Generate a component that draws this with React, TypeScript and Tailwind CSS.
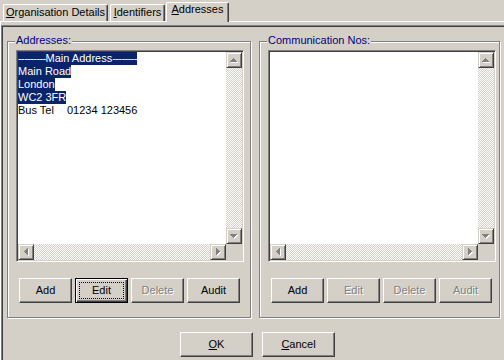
import React from "react";

type Dir = "up" | "down" | "left" | "right";

function Arrow({ dir, color = "#808080", shadow = true }: { dir: Dir; color?: string; shadow?: boolean }) {
  const rects: [number, number, number, number][] = [];
  for (let r = 0; r < 4; r++) {
    if (dir === "up") rects.push([3 - r, r, 2 * r + 1, 1]);
    if (dir === "down") rects.push([r, r, 7 - 2 * r, 1]);
    if (dir === "left") rects.push([r, 3 - r, 1, 2 * r + 1]);
    if (dir === "right") rects.push([r, r, 1, 7 - 2 * r]);
  }
  const horiz = dir === "up" || dir === "down";
  const w = horiz ? 8 : 5;
  const h = horiz ? 5 : 8;
  return (
    <svg width={w} height={h} viewBox={`0 0 ${w} ${h}`} shapeRendering="crispEdges" className="block">
      {shadow &&
        rects.map((r, i) => <rect key={"s" + i} x={r[0] + 1} y={r[1] + 1} width={r[2]} height={r[3]} fill="#ffffff" />)}
      {rects.map((r, i) => (
        <rect key={i} x={r[0]} y={r[1]} width={r[2]} height={r[3]} fill={color} />
      ))}
    </svg>
  );
}

function ScrollBtn({ dir }: { dir: Dir }) {
  return (
    <div className="w-[16px] h-[16px] shrink-0 bg-[#d4d0c8] border border-t-[#d4d0c8] border-l-[#d4d0c8] border-r-[#404040] border-b-[#404040] shadow-[inset_1px_1px_0_#ffffff,inset_-1px_-1px_0_#808080] flex items-center justify-center">
      <Arrow dir={dir} />
    </div>
  );
}

const track =
  "bg-[image:repeating-conic-gradient(#d4d0c8_0_25%,#ffffff_0_50%)] bg-[length:2px_2px]";

function ListBox({ children }: { children?: React.ReactNode }) {
  return (
    <div className="w-[228px] h-[212px] border border-t-[#808080] border-l-[#808080] border-r-white border-b-white shadow-[inset_1px_1px_0_#404040,inset_-1px_-1px_0_#d4d0c8] p-[1px]">
      <div className="w-full h-full grid grid-cols-[1fr_16px] grid-rows-[1fr_16px]">
        <div className="bg-white overflow-hidden">{children}</div>
        <div className="flex flex-col">
          <ScrollBtn dir="up" />
          <div className={"flex-1 " + track} />
          <ScrollBtn dir="down" />
        </div>
        <div className="flex">
          <ScrollBtn dir="left" />
          <div className={"flex-1 " + track} />
          <ScrollBtn dir="right" />
        </div>
        <div className="bg-[#d4d0c8]" />
      </div>
    </div>
  );
}

function Button({
  children,
  disabled,
  isDefault,
  wide,
}: {
  children: React.ReactNode;
  disabled?: boolean;
  isDefault?: boolean;
  wide?: boolean;
}) {
  const size = wide ? "w-[73px] h-[25px]" : "w-[53px] h-[25px]";
  const frame = isDefault
    ? "border border-black shadow-[inset_1px_1px_0_#ffffff,inset_-1px_-1px_0_#404040,inset_-2px_-2px_0_#808080]"
    : "border border-t-white border-l-white border-r-[#404040] border-b-[#404040] shadow-[inset_-1px_-1px_0_#808080]";
  const text = disabled ? "text-[#808080] [text-shadow:1px_1px_0_#ffffff]" : "text-black";
  return (
    <div className={`relative ${size} ${frame} bg-[#d4d0c8] flex items-center justify-center ${text}`}>
      {isDefault && <div className="absolute inset-[3px] border border-dotted border-black" />}
      <span className="relative">{children}</span>
    </div>
  );
}

function GroupBox({
  label,
  width,
  children,
}: {
  label: string;
  width: string;
  children: React.ReactNode;
}) {
  return (
    <div
      className={`relative ${width} h-[277px] border border-[#808080] shadow-[inset_1px_1px_0_#ffffff,1px_1px_0_#ffffff] pt-[8px] pl-[8px]`}
    >
      <div className="absolute left-[7px] -top-[8px] px-[1px] bg-[#d4d0c8] text-[#000080]">{label}</div>
      {children}
    </div>
  );
}

function Tab({
  children,
  selected,
  className,
}: {
  children: React.ReactNode;
  selected?: boolean;
  className: string;
}) {
  return (
    <div
      className={`${className} relative bg-[#d4d0c8] border-l border-t border-white border-r border-r-[#404040] rounded-t-[2px] shadow-[inset_-1px_0_0_#808080] flex justify-center ${
        selected ? "h-[20px] -mb-px z-10 pt-0" : "h-[17px] pt-[1px]"
      }`}
    >
      <span>{children}</span>
    </div>
  );
}

export default function App() {
  return (
    <div className="w-[504px] h-[360px] overflow-hidden bg-[#d4d0c8] text-black text-[11px] leading-[13px] font-['Liberation_Sans',Arial,sans-serif]">
      {/* Tab strip */}
      <div className="h-[22px] border-b border-white flex items-end pl-[3px]">
        <Tab className="w-[105px]">
          <u>O</u>rganisation Details
        </Tab>
        <Tab className="w-[55px] ml-[2px]">
          <u>I</u>dentifiers
        </Tab>
        <Tab className="w-[63px] ml-[1px]" selected>
          <u>A</u>ddresses
        </Tab>
      </div>

      {/* Page */}
      <div className="border-l border-white pt-[3px]">
        <div className="w-[540px] h-[400px] border-t border-l border-[#808080] shadow-[inset_1px_1px_0_#404040]">
          <div className="flex mt-[15px] ml-[5px]">
            <GroupBox label="Addresses:" width="w-[244px]">
              <ListBox>
                <div className="h-[13px]">
                  <span className="inline-block h-[13px] bg-[#0a246a] text-white">
                    <span className="tracking-[-0.6px]">---------</span>Main Address
                    <span className="tracking-[-0.6px]">--------</span>
                  </span>
                </div>
                <div className="h-[13px]">
                  <span className="inline-block h-[13px] bg-[#0a246a] text-white">Main Road</span>
                </div>
                <div className="h-[13px]">
                  <span className="inline-block h-[13px] bg-[#0a246a] text-white">London</span>
                </div>
                <div className="h-[13px]">
                  <span className="inline-block h-[13px] bg-[#0a246a] text-white">WC2 3FR</span>
                </div>
                <div className="h-[13px] flex">
                  <span className="w-[49px]">Bus Tel</span>
                  <span>01234 123456</span>
                </div>
              </ListBox>
              <div className="flex gap-[3px] mt-[16px] ml-[3px]">
                <Button>Add</Button>
                <Button isDefault>Edit</Button>
                <Button disabled>Delete</Button>
                <Button>Audit</Button>
              </div>
            </GroupBox>
            <div className="ml-[8px]">
              <GroupBox label="Communication Nos:" width="w-[241px]">
                <ListBox />
                <div className="flex gap-[3px] mt-[16px] ml-[3px]">
                  <Button>Add</Button>
                  <Button disabled>Edit</Button>
                  <Button disabled>Delete</Button>
                  <Button disabled>Audit</Button>
                </div>
              </GroupBox>
            </div>
          </div>

          <div className="flex gap-[9px] mt-[14px] ml-[178px]">
            <Button wide>
              <u>O</u>K
            </Button>
            <Button wide>
              <u>C</u>ancel
            </Button>
          </div>
        </div>
      </div>
    </div>
  );
}
